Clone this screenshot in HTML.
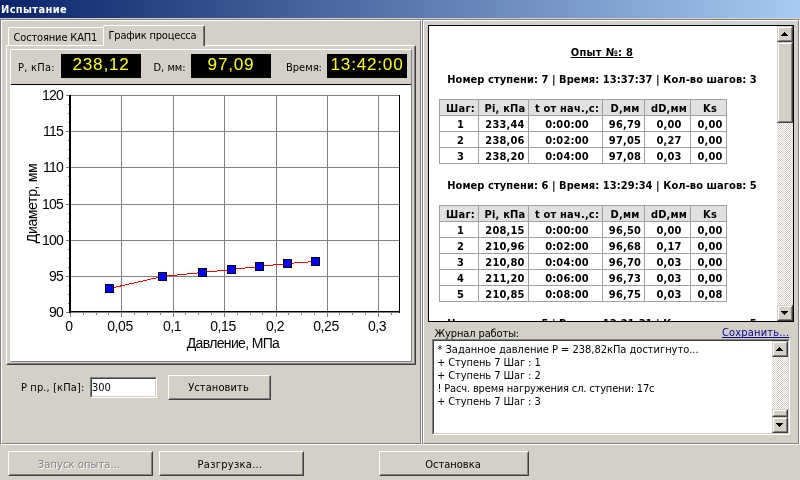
<!DOCTYPE html>
<html lang="ru">
<head>
<meta charset="utf-8">
<title>Испытание</title>
<style>
html,body{margin:0;padding:0;}
body{width:800px;height:480px;overflow:hidden;background:#d4d0c8;position:relative;
 font-family:"DejaVu Sans Condensed","Liberation Sans",sans-serif;font-size:11px;line-height:13px;color:#000;}
*{box-sizing:border-box;}
.a{position:absolute;}
.t{position:absolute;white-space:nowrap;line-height:13px;height:13px;}
#title{left:0;top:0;width:800px;height:18px;background:linear-gradient(90deg,#0a246a 0%,#a6caf0 100%);}
#title span{left:1px;top:3px;color:#fff;font-weight:bold;letter-spacing:0.35px;}
/* etched panels */
.etch{border:1px solid;border-color:#808080 #fff #fff #808080;}
.etch>i{position:absolute;left:0;top:0;right:0;bottom:0;border:1px solid;border-color:#fff #808080 #808080 #fff;}
/* raised 3d (buttons, tab pane) */
.btn{border:1px solid;border-color:#fff #404040 #404040 #fff;background:#d4d0c8;text-align:center;}
.btn>i{position:absolute;left:0;top:0;right:0;bottom:0;border:1px solid;border-color:#d4d0c8 #808080 #808080 #d4d0c8;}
.btn>span{position:absolute;left:0;right:0;white-space:nowrap;}
/* sunken */
.sunk{border:1px solid;border-color:#808080 #fff #fff #808080;background:#fff;}
.sunk>i{position:absolute;left:0;top:0;right:0;bottom:0;border:1px solid;border-color:#404040 #d4d0c8 #d4d0c8 #404040;pointer-events:none;}
.lcd{background:#000;color:#ffff00;text-align:center;font-family:"Liberation Sans",sans-serif;font-size:17.2px;letter-spacing:0.75px;line-height:20px;height:24px;width:80px;top:54px;white-space:nowrap;}
.dith{background-color:#fff;background-image:conic-gradient(#d4d0c8 25%,#fff 0 50%,#d4d0c8 0 75%,#fff 0);background-size:2px 2px;}
.sb{background:#d4d0c8;border:1px solid;border-color:#d4d0c8 #404040 #404040 #d4d0c8;}
.sb>i{position:absolute;left:0;top:0;right:0;bottom:0;border:1px solid;border-color:#fff #808080 #808080 #fff;}
.sb>svg{position:absolute;left:3px;top:5px;}
table.r{position:absolute;border-collapse:collapse;font-weight:bold;font-size:11px;}
table.r td{border:1px solid #a0a0a0;padding:1px 0 0 3px;height:16px;text-align:center;line-height:13px;white-space:nowrap;letter-spacing:0.2px;}
table.r tr.h td{background:#e0e0e0;}
.b{font-weight:bold;letter-spacing:0.07px;}
</style>
</head>
<body><div id="wrap" style="position:absolute;left:0;top:0;width:800px;height:480px;will-change:transform;">
<div id="title" class="a"><span class="t">Испытание</span></div>

<!-- left panel -->
<div class="a etch" style="left:0;top:19px;width:422px;height:426px;"><i></i></div>
<!-- right panel -->
<div class="a etch" style="left:422px;top:19px;width:378px;height:426px;"><i></i></div>

<!-- tabs -->
<div class="a" id="tab1" style="left:8px;top:27px;width:96px;height:19px;border:1px solid;border-color:#fff #404040 transparent #fff;border-radius:2px 2px 0 0;"></div>
<div class="t" style="left:13.5px;top:31px;letter-spacing:-0.15px;">Состояние КАП1</div>
<!-- tab pane -->
<div class="a btn" style="left:6px;top:45px;width:410px;height:320px;"><i></i></div>
<div class="a" id="tab2" style="left:103px;top:25px;width:102px;height:21px;background:#d4d0c8;border:1px solid;border-color:#fff #404040 transparent #fff;border-bottom:0;border-radius:2px 2px 0 0;"><i class="a" style="right:0;top:0;width:1px;height:20px;background:#808080;"></i></div>
<div class="t" style="left:108.5px;top:29px;letter-spacing:-0.2px;">График процесса</div>

<!-- display panel -->
<div class="t" style="left:18px;top:61px;letter-spacing:0.25px;">P, кПа:</div>
<div class="a lcd" style="left:61px;">238,12</div>
<div class="t" style="left:153.5px;top:61px;">D, мм:</div>
<div class="a lcd" style="left:191px;">97,09</div>
<div class="t" style="left:286px;top:61px;">Время:</div>
<div class="a lcd" style="left:327px;">13:42:00</div>

<!-- chart -->
<div class="a" id="chart" style="left:10px;top:84px;width:401px;height:277px;background:#fff;border-top:1px solid #000;">
<svg class="a" style="left:0;top:-1px" width="401" height="277" viewBox="10 84 401 277" font-family="Liberation Sans, sans-serif" font-size="14" shape-rendering="crispEdges">
<rect x="66" y="95" width="334" height="1" fill="#808080"/>
<rect x="66" y="131" width="334" height="1" fill="#808080"/>
<rect x="66" y="167" width="334" height="1" fill="#808080"/>
<rect x="66" y="204" width="334" height="1" fill="#808080"/>
<rect x="66" y="240" width="334" height="1" fill="#808080"/>
<rect x="66" y="276" width="334" height="1" fill="#808080"/>
<rect x="121" y="95" width="1" height="222" fill="#808080"/>
<rect x="173" y="95" width="1" height="222" fill="#808080"/>
<rect x="224" y="95" width="1" height="222" fill="#808080"/>
<rect x="276" y="95" width="1" height="222" fill="#808080"/>
<rect x="327" y="95" width="1" height="222" fill="#808080"/>
<rect x="378" y="95" width="1" height="222" fill="#808080"/>
<rect x="70" y="313" width="1" height="4" fill="#808080"/>
<rect x="68" y="104" width="1" height="1" fill="#808080"/>
<rect x="68" y="113" width="1" height="1" fill="#808080"/>
<rect x="68" y="122" width="1" height="1" fill="#808080"/>
<rect x="68" y="140" width="1" height="1" fill="#808080"/>
<rect x="68" y="149" width="1" height="1" fill="#808080"/>
<rect x="68" y="158" width="1" height="1" fill="#808080"/>
<rect x="68" y="176" width="1" height="1" fill="#808080"/>
<rect x="68" y="185" width="1" height="1" fill="#808080"/>
<rect x="68" y="194" width="1" height="1" fill="#808080"/>
<rect x="68" y="213" width="1" height="1" fill="#808080"/>
<rect x="68" y="222" width="1" height="1" fill="#808080"/>
<rect x="68" y="231" width="1" height="1" fill="#808080"/>
<rect x="68" y="249" width="1" height="1" fill="#808080"/>
<rect x="68" y="258" width="1" height="1" fill="#808080"/>
<rect x="68" y="267" width="1" height="1" fill="#808080"/>
<rect x="68" y="285" width="1" height="1" fill="#808080"/>
<rect x="68" y="294" width="1" height="1" fill="#808080"/>
<rect x="68" y="303" width="1" height="1" fill="#808080"/>
<rect x="83" y="313" width="1" height="2" fill="#808080"/>
<rect x="96" y="313" width="1" height="2" fill="#808080"/>
<rect x="108" y="313" width="1" height="2" fill="#808080"/>
<rect x="134" y="313" width="1" height="2" fill="#808080"/>
<rect x="147" y="313" width="1" height="2" fill="#808080"/>
<rect x="160" y="313" width="1" height="2" fill="#808080"/>
<rect x="185" y="313" width="1" height="2" fill="#808080"/>
<rect x="198" y="313" width="1" height="2" fill="#808080"/>
<rect x="211" y="313" width="1" height="2" fill="#808080"/>
<rect x="237" y="313" width="1" height="2" fill="#808080"/>
<rect x="250" y="313" width="1" height="2" fill="#808080"/>
<rect x="262" y="313" width="1" height="2" fill="#808080"/>
<rect x="288" y="313" width="1" height="2" fill="#808080"/>
<rect x="301" y="313" width="1" height="2" fill="#808080"/>
<rect x="314" y="313" width="1" height="2" fill="#808080"/>
<rect x="339" y="313" width="1" height="2" fill="#808080"/>
<rect x="352" y="313" width="1" height="2" fill="#808080"/>
<rect x="365" y="313" width="1" height="2" fill="#808080"/>
<rect x="391" y="313" width="1" height="2" fill="#808080"/>
<rect x="69" y="95" width="2" height="218" fill="#000"/>
<rect x="69" y="311" width="331" height="1" fill="#000"/>
<rect x="66" y="312" width="334" height="1" fill="#808080"/>
<rect x="69" y="312" width="2" height="1" fill="#000"/>
<rect x="399" y="312" width="1" height="1" fill="#000"/>
<rect x="399" y="95" width="1" height="217" fill="#000"/>
<text x="63" y="100" text-anchor="end" letter-spacing="-0.8">120</text>
<text x="63" y="136" text-anchor="end" letter-spacing="-0.8">115</text>
<text x="63" y="172" text-anchor="end" letter-spacing="-0.8">110</text>
<text x="63" y="209" text-anchor="end" letter-spacing="-0.8">105</text>
<text x="63" y="245" text-anchor="end" letter-spacing="-0.8">100</text>
<text x="63" y="281" text-anchor="end" letter-spacing="-0.8">95</text>
<text x="63" y="317" text-anchor="end" letter-spacing="-0.8">90</text>
<text x="69" y="331" text-anchor="middle" letter-spacing="-0.45">0</text>
<text x="120" y="331" text-anchor="middle" letter-spacing="-0.45">0,05</text>
<text x="172" y="331" text-anchor="middle" letter-spacing="-0.45">0,1</text>
<text x="223" y="331" text-anchor="middle" letter-spacing="-0.45">0,15</text>
<text x="275" y="331" text-anchor="middle" letter-spacing="-0.45">0,2</text>
<text x="326" y="331" text-anchor="middle" letter-spacing="-0.45">0,25</text>
<text x="377" y="331" text-anchor="middle" letter-spacing="-0.45">0,3</text>
<text x="233" y="348" text-anchor="middle" letter-spacing="-0.65">Давление, МПа</text>
<text transform="translate(37,203.5) rotate(-90)" text-anchor="middle" letter-spacing="-0.35">Диаметр, мм</text>
<polyline shape-rendering="crispEdges" fill="none" stroke="#ff0000" stroke-width="1" points="109.5,288.5 162.5,276.5 202.5,272.5 231.5,269.5 259.5,266.5 287.5,263.5 315.5,261.5"/>
<rect x="105" y="284" width="9" height="9" fill="#000"/><rect x="106" y="285" width="7" height="7" fill="#0000ff"/>
<rect x="158" y="272" width="9" height="9" fill="#000"/><rect x="159" y="273" width="7" height="7" fill="#0000ff"/>
<rect x="198" y="268" width="9" height="9" fill="#000"/><rect x="199" y="269" width="7" height="7" fill="#0000ff"/>
<rect x="227" y="265" width="9" height="9" fill="#000"/><rect x="228" y="266" width="7" height="7" fill="#0000ff"/>
<rect x="255" y="262" width="9" height="9" fill="#000"/><rect x="256" y="263" width="7" height="7" fill="#0000ff"/>
<rect x="283" y="259" width="9" height="9" fill="#000"/><rect x="284" y="260" width="7" height="7" fill="#0000ff"/>
<rect x="311" y="257" width="9" height="9" fill="#000"/><rect x="312" y="258" width="7" height="7" fill="#0000ff"/>
</svg>
</div>

<div class="a" style="left:10px;top:49px;width:402px;height:313px;border:1px solid;border-color:#fff #808080 #808080 #fff;"></div>
<!-- P pr -->
<div class="t" style="left:21px;top:381px;letter-spacing:0.12px;">P пр., [кПа]:</div>
<div class="a sunk" style="left:90px;top:377px;width:67px;height:21px;"><i></i><span class="t" style="left:1px;top:3px;">300</span></div>
<div class="a btn" style="left:168px;top:375px;width:103px;height:25px;"><i></i><span style="top:5px;left:-2px;letter-spacing:0.1px;">Установить</span></div>

<!-- bottom buttons -->
<div class="a btn" style="left:8px;top:451px;width:145px;height:25px;"><i></i><span style="top:6px;left:-3px;letter-spacing:0.1px;color:#808080;text-shadow:1px 1px 0 #fff;">Запуск опыта...</span></div>
<div class="a btn" style="left:159px;top:451px;width:145px;height:25px;"><i></i><span style="top:6px;left:-3px;letter-spacing:0.3px;">Разгрузка...</span></div>
<div class="a btn" style="left:379px;top:451px;width:150px;height:25px;"><i></i><span style="top:6px;left:-2px;">Остановка</span></div>

<!-- html view -->
<div class="a" id="view" style="left:428px;top:25px;width:366px;height:297px;border:1px solid #000;background:#fff;overflow:hidden;">
<div class="t b" style="left:-1px;width:348px;text-align:center;top:20px;text-decoration:underline;text-decoration-skip-ink:none;letter-spacing:0.35px;">Опыт №: 8</div>
<div class="t b" style="left:-1px;width:348px;text-align:center;top:47px;">Номер ступени: 7 | Время: 13:37:37 | Кол-во шагов: 3</div>
<table class="r" style="left:10px;top:73px;"><colgroup><col style="width:39px"><col style="width:50px"><col style="width:74px"><col style="width:42px"><col style="width:46px"><col style="width:36px"></colgroup>
<tr class="h"><td>Шаг:</td><td>Pi, кПа</td><td>t от нач.,с:</td><td>D,мм</td><td>dD,мм</td><td>Ks</td></tr>
<tr><td>1</td><td>233,44</td><td>0:00:00</td><td>96,79</td><td>0,00</td><td>0,00</td></tr>
<tr><td>2</td><td>238,06</td><td>0:02:00</td><td>97,05</td><td>0,27</td><td>0,00</td></tr>
<tr><td>3</td><td>238,20</td><td>0:04:00</td><td>97,08</td><td>0,03</td><td>0,00</td></tr>
</table>
<div class="t b" style="left:-1px;width:348px;text-align:center;top:153px;">Номер ступени: 6 | Время: 13:29:34 | Кол-во шагов: 5</div>
<table class="r" style="left:10px;top:179px;"><colgroup><col style="width:39px"><col style="width:50px"><col style="width:74px"><col style="width:42px"><col style="width:46px"><col style="width:36px"></colgroup>
<tr class="h"><td>Шаг:</td><td>Pi, кПа</td><td>t от нач.,с:</td><td>D,мм</td><td>dD,мм</td><td>Ks</td></tr>
<tr><td>1</td><td>208,15</td><td>0:00:00</td><td>96,50</td><td>0,00</td><td>0,00</td></tr>
<tr><td>2</td><td>210,96</td><td>0:02:00</td><td>96,68</td><td>0,17</td><td>0,00</td></tr>
<tr><td>3</td><td>210,80</td><td>0:04:00</td><td>96,70</td><td>0,03</td><td>0,00</td></tr>
<tr><td>4</td><td>211,20</td><td>0:06:00</td><td>96,73</td><td>0,03</td><td>0,00</td></tr>
<tr><td>5</td><td>210,85</td><td>0:08:00</td><td>96,75</td><td>0,03</td><td>0,08</td></tr>
</table>
<div class="t b" style="left:-1px;width:348px;text-align:center;top:291px;">Номер ступени: 5 | Время: 13:21:31 | Кол-во шагов: 5</div>
<!-- scrollbar -->
<div class="a dith" style="left:348px;top:0;width:16px;height:295px;"></div>
<div class="a sb" style="left:348px;top:0;width:16px;height:16px;"><i></i><svg width="7" height="4" viewBox="0 0 7 4" shape-rendering="crispEdges"><path d="M3 0h1v1h1v1h1v1h1v1h-7v-1h1v-1h1v-1h1z" fill="#000"/></svg></div>
<div class="a sb" style="left:348px;top:16px;width:16px;height:81px;"><i></i></div>
<div class="a sb" style="left:348px;top:279px;width:16px;height:16px;"><i></i><svg width="7" height="4" viewBox="0 0 7 4" shape-rendering="crispEdges"><path d="M0 0h7v1h-1v1h-1v1h-1v1h-1v-1h-1v-1h-1v-1h-1z" fill="#000"/></svg></div>
</div>

<!-- journal -->
<div class="t" style="left:434.5px;top:327px;letter-spacing:-0.12px;">Журнал работы:</div>
<div class="t" style="left:722px;top:326px;color:#000090;text-decoration:underline;text-decoration-skip-ink:none;letter-spacing:0.18px;">Сохранить...</div>
<div class="a sunk" id="memo" style="left:432px;top:339px;width:358px;height:96px;"><i></i>
<div class="t" style="left:4.5px;top:3px;letter-spacing:-0.02px;">* Заданное давление P = 238,82кПа достигнуто...</div>
<div class="t" style="left:4px;top:16px;letter-spacing:-0.08px;">+ Ступень 7 Шаг : 1</div>
<div class="t" style="left:4px;top:29px;letter-spacing:-0.08px;">+ Ступень 7 Шаг : 2</div>
<div class="t" style="left:4.5px;top:42px;letter-spacing:-0.16px;">! Расч. время нагружения сл. ступени: 17с</div>
<div class="t" style="left:4px;top:55px;letter-spacing:-0.08px;">+ Ступень 7 Шаг : 3</div>
<div class="a dith" style="left:339px;top:1px;width:16px;height:92px;"></div>
<div class="a sb" style="left:339px;top:1px;width:16px;height:16px;"><i></i><svg width="7" height="4" viewBox="0 0 7 4" shape-rendering="crispEdges"><path d="M3 0h1v1h1v1h1v1h1v1h-7v-1h1v-1h1v-1h1z" fill="#000"/></svg></div>
<div class="a sb" style="left:339px;top:69px;width:16px;height:8px;"><i></i></div>
<div class="a sb" style="left:339px;top:77px;width:16px;height:16px;"><i></i><svg width="7" height="4" viewBox="0 0 7 4" shape-rendering="crispEdges"><path d="M0 0h7v1h-1v1h-1v1h-1v1h-1v-1h-1v-1h-1v-1h-1z" fill="#000"/></svg></div>
</div>
</div></body>
</html>
